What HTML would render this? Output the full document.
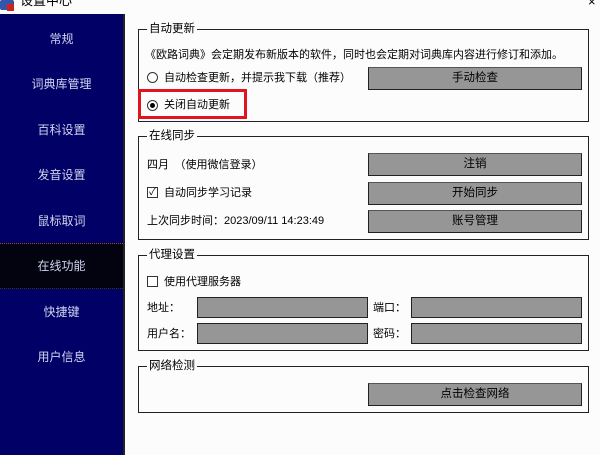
<!DOCTYPE html>
<html><head><meta charset="utf-8"><style>
*{margin:0;padding:0;box-sizing:border-box}
body{width:600px;height:455px;background:#fcfcfc;position:relative;overflow:hidden;font-family:"Liberation Sans","Noto Sans CJK SC",sans-serif;font-size:11px;color:#000}
.a{position:absolute;white-space:nowrap;line-height:14px}
#side{position:absolute;left:0;top:14px;width:125px;height:441px;background:#000066;border-right:2px solid #222}
.it{position:absolute;left:0;width:123px;text-align:center;color:#cfd3ee;font-size:12px;line-height:14px}
.sel{position:absolute;left:0;top:229px;width:123px;height:46px;background:#03030f;border-top:1px dotted #a44;border-bottom:1px dotted #334}
.g{position:absolute;left:138px;width:451px;border:1px solid #222}
.gt{position:absolute;left:8px;top:-8px;background:#fcfcfc;padding:0 2px;line-height:14px;font-size:11.5px}
.btn{position:absolute;left:368px;width:214px;height:23px;background:#969696;border:1px solid #222;border-top-color:#555;text-align:center;line-height:21px;font-size:11.5px}
.in{position:absolute;height:21px;background:#969696;border:1px solid #222;width:171px}
.rd{position:absolute;width:11px;height:11px;border:1px solid #333;border-radius:50%;background:#fff}
.cb{position:absolute;width:11px;height:11px;border:1px solid #333;background:#fff}
</style></head><body>
<div class="a" style="left:0;top:0;width:14px;height:10px;background:#3355aa;border-radius:2px"></div>
<div class="a" style="left:7px;top:4px;width:7px;height:7px;background:#c22"></div>
<div class="a" style="left:20px;top:-6px;font-size:13px">设置中心</div>
<div class="a" style="left:588px;top:-5px;font-size:13px">×</div>
<div id="side">
<div class="sel"></div>
<div class="it" style="top:18px">常规</div>
<div class="it" style="top:63px">词典库管理</div>
<div class="it" style="top:109px">百科设置</div>
<div class="it" style="top:154px">发音设置</div>
<div class="it" style="top:200px">鼠标取词</div>
<div class="it" style="top:245px">在线功能</div>
<div class="it" style="top:291px">快捷键</div>
<div class="it" style="top:336px">用户信息</div>
</div>

<div class="g" style="top:29px;height:93px"><div class="gt">自动更新</div></div>
<div class="a" style="left:145px;top:48px">《欧路词典》会定期发布新版本的软件，同时也会定期对词典库内容进行修订和添加。</div>
<div class="rd" style="left:147px;top:72px"></div>
<div class="a" style="left:164px;top:71px">自动检查更新，并提示我下载（推荐）</div>
<div class="btn" style="top:67px">手动检查</div>
<div class="a" style="left:138px;top:89px;width:109px;height:30px;border:3px solid #e0141e"></div>
<div class="rd" style="left:147px;top:100px"></div>
<div class="a" style="left:150px;top:103px;width:5px;height:5px;border-radius:50%;background:#000"></div>
<div class="a" style="left:164px;top:98px">关闭自动更新</div>

<div class="g" style="top:136px;height:104px"><div class="gt">在线同步</div></div>
<div class="a" style="left:147px;top:158px">四月　（使用微信登录）</div>
<div class="btn" style="top:153px">注销</div>
<div class="cb" style="left:147px;top:187px;font-size:10px;line-height:9px;text-align:center">✓</div>
<div class="a" style="left:164px;top:186px">自动同步学习记录</div>
<div class="btn" style="top:182px">开始同步</div>
<div class="a" style="left:147px;top:214px">上次同步时间：2023/09/11 14:23:49</div>
<div class="btn" style="top:210px">账号管理</div>

<div class="g" style="top:255px;height:96px"><div class="gt">代理设置</div></div>
<div class="cb" style="left:147px;top:276px"></div>
<div class="a" style="left:164px;top:275px">使用代理服务器</div>
<div class="a" style="left:147px;top:301px">地址：</div>
<div class="in" style="left:197px;top:297px"></div>
<div class="a" style="left:373px;top:301px">端口：</div>
<div class="in" style="left:411px;top:297px"></div>
<div class="a" style="left:147px;top:327px">用户名：</div>
<div class="in" style="left:197px;top:323px"></div>
<div class="a" style="left:373px;top:327px">密码：</div>
<div class="in" style="left:411px;top:323px"></div>

<div class="g" style="top:366px;height:47px"><div class="gt">网络检测</div></div>
<div class="btn" style="top:383px">点击检查网络</div>
</body></html>
